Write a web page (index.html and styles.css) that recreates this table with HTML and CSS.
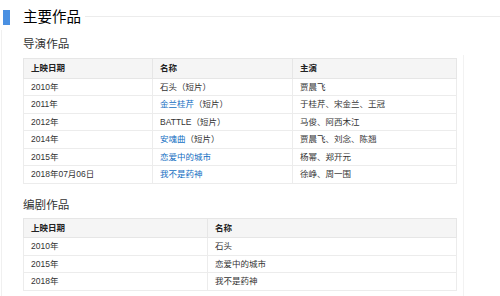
FILE: index.html
```html
<!DOCTYPE html>
<html lang="zh">
<head>
<meta charset="utf-8">
<link rel="stylesheet" href="styles.css">
</head>
<body>
<div class="page">
  <div class="header">
    <span class="bar"></span>
    <h2 class="title">主要作品</h2>
    <span class="rule"></span>
  </div>
  <div class="content">
    <h3 class="sub first">导演作品</h3>
    <div class="wrap">
      <table class="tbl t1">
        <colgroup><col class="c1"><col class="c2"><col class="c3"></colgroup>
        <tr class="head"><th>上映日期</th><th>名称</th><th>主演</th></tr>
        <tr><td>2010年</td><td>石头（短片）</td><td>贾晨飞</td></tr>
        <tr><td>2011年</td><td><a>金兰桂芹</a>（短片）</td><td>于桂芹、宋金兰、王冠</td></tr>
        <tr><td>2012年</td><td>BATTLE（短片）</td><td>马俊、阿西木江</td></tr>
        <tr><td>2014年</td><td><a>安魂曲</a>（短片）</td><td>贾晨飞、刘念、陈翘</td></tr>
        <tr><td>2015年</td><td><a>恋爱中的城市</a></td><td>杨幂、郑开元</td></tr>
        <tr><td>2018年07月06日</td><td><a>我不是药神</a></td><td>徐峥、周一围</td></tr>
      </table>
      <h3 class="sub second">编剧作品</h3>
      <table class="tbl t2">
        <colgroup><col class="d1"><col class="d2"></colgroup>
        <tr class="head"><th>上映日期</th><th>名称</th></tr>
        <tr><td>2010年</td><td>石头</td></tr>
        <tr><td>2015年</td><td>恋爱中的城市</td></tr>
        <tr><td>2018年</td><td>我不是药神</td></tr>
      </table>
    </div>
  </div>
</div>
</body>
</html>
```

FILE: styles.css
```css
html, body {
  margin: 0;
  padding: 0;
  background: #fff;
}
body {
  font-family: "Liberation Sans", "Noto Sans CJK SC", sans-serif;
  color: #333;
}
.page {
  width: 500px;
  height: 296px;
  overflow: hidden;
}
.header {
  display: flex;
  align-items: center;
  padding: 9px 0 0 3px;
  height: 16px;
}
.bar {
  width: 7px;
  height: 15px;
  background: #4a90e2;
  flex: none;
}
.title {
  margin: 0 0 0 13px;
  font-size: 14.5px;
  line-height: 16px;
  font-weight: normal;
  color: #000;
}
.rule {
  flex: 1;
  height: 1px;
  background: #ececec;
  margin-left: 4px;
  margin-top: -2px;
}
.content {
  margin-top: 5px;
  margin-left: 1px;
  padding-left: 21px;
  border-left: 1px solid #f0f0f0;
  height: 300px;
}
.sub {
  margin: 0;
  font-size: 11.6px;
  line-height: 14px;
  font-weight: normal;
  color: #333;
}
.sub.first {
  padding-top: 7px;
}
.wrap {
  margin-top: 4px;
  padding-top: 3px;
  width: 440px;
  border-right: 1px solid #f2f2f2;
  height: 260px;
}
.sub.second {
  margin-top: 14px;
  margin-bottom: 6px;
}
.tbl {
  border-collapse: collapse;
  width: 433px;
  table-layout: fixed;
  font-size: 8.5px;
  border: 1px solid #e6e6e6;
}
.c1 { width: 129px; }
.c2 { width: 140px; }
.c3 { width: 164px; }
.d1 { width: 184px; }
.d2 { width: 249px; }
.tbl th, .tbl td {
  text-align: left;
  padding: 0 7px;
  line-height: 10px;
  border: 1px solid #ececec;
  white-space: nowrap;
}
.tbl th {
  background: #f5f5f5;
  font-weight: bold;
  color: #222;
  border-color: #e6e6e6;
}
.tbl tr {
  height: 17.5px;
}
.tbl tr.head {
  height: 19.5px;
}
.tbl a {
  color: #136ec2;
  text-decoration: none;
}
```
